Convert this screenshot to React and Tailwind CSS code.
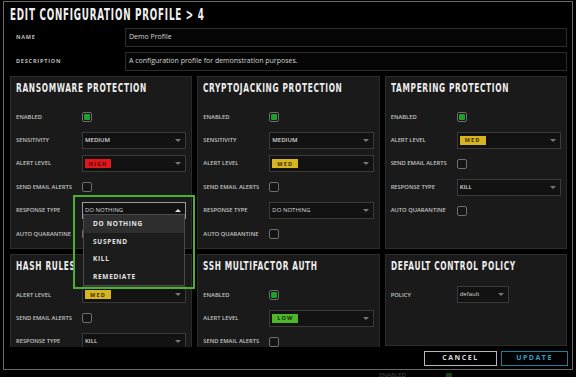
const TITLE = "font-['DejaVu_Sans',sans-serif] font-stretch-condensed whitespace-nowrap";
const BODY = "font-['Open_Sans',sans-serif]";

const Caret = ({ up }) =>
  up ? (
    <span className="w-0 h-0 border-l-[3px] border-r-[3px] border-b-[3px] border-l-transparent border-r-transparent border-b-[#e0e0e0]" />
  ) : (
    <span className="w-0 h-0 border-l-[3px] border-r-[3px] border-t-[3px] border-l-transparent border-r-transparent border-t-[#777777]" />
  );

const Badge = ({ level }) => {
  const colors = {
    HIGH: "bg-[#e3161c] text-[#3a0505]",
    MED: "bg-[#d8b520] text-[#3a3000]",
    LOW: "bg-[#4fb52a] text-[#0f3005]",
  };
  return (
    <span
      className={`w-[26px] h-[9px] flex items-center justify-center text-[5.5px] font-bold tracking-[1.2px] ${colors[level]}`}
    >
      {level}
    </span>
  );
};

const Check = ({ on }) => (
  <span className="w-[10px] h-[10px] border-[1.5px] border-[#6e6e6e] rounded-[2px] bg-[#141414] flex items-center justify-center">
    {on && <span className="w-[6px] h-[6px] bg-[#20a02a] rounded-[1px]" />}
  </span>
);

const Select = ({ children, open, narrow }) => (
  <div className={`relative ${narrow ? "w-[52px]" : "w-full"}`}>
    <div
      className={`h-[17px] border bg-[#121212] flex items-center justify-between pl-[2px] pr-[4px] ${
        open ? "border-[#9a9a9a]" : "border-[#3a3a3a]"
      }`}
    >
      <div className="text-[6px] font-semibold text-[#d8d8d8] flex items-center">{children}</div>
      <Caret up={open} />
    </div>
    {open && (
      <>
        <div className="absolute left-[-9px] top-[-7px] w-[122px] h-[94px] border-2 border-[#4bb12f] pointer-events-none" />
        <div className="absolute left-[1px] right-[1px] top-[12px] bg-[#1c1c1c] border border-[#4a4a4a] z-20">
          {["DO NOTHING", "SUSPEND", "KILL", "REMEDIATE"].map((o, i) => (
            <div
              key={o}
              className={`h-[17.6px] flex items-center pl-[9px] text-[6.5px] font-bold tracking-[0.7px] text-[#e4e4e4] ${
                i === 0 ? "bg-[#2e2e2e]" : ""
              }`}
            >
              {o}
            </div>
          ))}
        </div>
      </>
    )}
  </div>
);

const Row = ({ label, children }) => (
  <div className="flex items-center h-[23.4px]">
    <div className="w-[66px] shrink-0 text-[5.8px] font-semibold text-[#c4c4c4]">{label}</div>
    <div className="flex-1 flex items-center">{children}</div>
  </div>
);

const Panel = ({ title, children, className = "" }) => (
  <div className={`border border-[#2c2c2c] bg-[#1a1a1a] px-[5px] pt-[5px] ${className}`}>
    <div className={`h-[12px] flex items-center text-[12.5px] font-bold tracking-[1px] text-[#ececec] ${TITLE}`}>
      <span className="inline-block origin-left scale-x-[0.66]">{title}</span>
    </div>
    <div className="mt-[11.3px]">{children}</div>
  </div>
);

export default function App() {
  return (
    <div className={`relative w-[576px] h-[377px] bg-black overflow-hidden ${BODY}`}>
      <div className="pt-[371px] pl-[379px] flex items-center gap-[40px]">
        <span className="text-[6px] font-semibold text-[#3c3c3c]">ENABLED</span>
        <span className="w-[6px] h-[6px] bg-[#173f17]" />
      </div>

      <div className="absolute left-[3px] top-[1px] w-[570px] h-[369px] border border-[#6a6a6a] bg-black flex flex-col">
        <div className="h-[345px] overflow-hidden pl-[6px] pr-[5px]">
          <div className={`h-[26px] flex items-center text-[15px] font-bold tracking-[1.2px] text-[#f0f0f0] ${TITLE}`}>
            <span className="inline-block origin-left scale-x-[0.65]">EDIT CONFIGURATION PROFILE &gt; 4</span>
          </div>

          <div className="flex flex-col gap-[5px]">
            <div className="flex items-center h-[19px]">
              <div className="w-[115px] pl-[6px] text-[5.5px] font-bold tracking-[0.8px] text-[#bdbdbd]">NAME</div>
              <div className="flex-1 h-full border border-[#2c2c2c] bg-[#050505] flex items-center pl-[3px] text-[7px] text-[#d6d6d6]">
                Demo Profile
              </div>
            </div>
            <div className="flex items-center h-[19px]">
              <div className="w-[115px] pl-[6px] text-[5.5px] font-bold tracking-[0.8px] text-[#bdbdbd]">DESCRIPTION</div>
              <div className="flex-1 h-full border border-[#2c2c2c] bg-[#050505] flex items-center pl-[3px] text-[7px] text-[#d6d6d6]">
                A configuration profile for demonstration purposes.
              </div>
            </div>
          </div>

          <div className="mt-[5px] grid grid-cols-3 gap-[5px] items-start">
            <Panel title="RANSOMWARE PROTECTION" className="relative z-10 h-[173px]">
              <Row label="ENABLED"><Check on /></Row>
              <Row label="SENSITIVITY"><Select>MEDIUM</Select></Row>
              <Row label="ALERT LEVEL"><Select><Badge level="HIGH" /></Select></Row>
              <Row label="SEND EMAIL ALERTS"><Check /></Row>
              <Row label="RESPONSE TYPE"><Select open><span className="font-normal">DO NOTHING</span></Select></Row>
              <Row label="AUTO QUARANTINE"><Check /></Row>
            </Panel>
            <Panel title="CRYPTOJACKING PROTECTION" className="h-[173px]">
              <Row label="ENABLED"><Check on /></Row>
              <Row label="SENSITIVITY"><Select>MEDIUM</Select></Row>
              <Row label="ALERT LEVEL"><Select><Badge level="MED" /></Select></Row>
              <Row label="SEND EMAIL ALERTS"><Check /></Row>
              <Row label="RESPONSE TYPE"><Select><span className="font-normal">DO NOTHING</span></Select></Row>
              <Row label="AUTO QUARANTINE"><Check /></Row>
            </Panel>
            <Panel title="TAMPERING PROTECTION" className="h-[173px]">
              <Row label="ENABLED"><Check on /></Row>
              <Row label="ALERT LEVEL"><Select><Badge level="MED" /></Select></Row>
              <Row label="SEND EMAIL ALERTS"><Check /></Row>
              <Row label="RESPONSE TYPE"><Select>KILL</Select></Row>
              <Row label="AUTO QUARANTINE"><Check /></Row>
            </Panel>

            <Panel title="HASH RULES" className="h-[150px]">
              <Row label="ALERT LEVEL"><Select><Badge level="MED" /></Select></Row>
              <Row label="SEND EMAIL ALERTS"><Check /></Row>
              <Row label="RESPONSE TYPE"><Select>KILL</Select></Row>
              <Row label="AUTO QUARANTINE"><Check /></Row>
            </Panel>
            <Panel title="SSH MULTIFACTOR AUTH" className="h-[150px]">
              <Row label="ENABLED"><Check on /></Row>
              <Row label="ALERT LEVEL"><Select><Badge level="LOW" /></Select></Row>
              <Row label="SEND EMAIL ALERTS"><Check /></Row>
              <Row label="RESPONSE TYPE"><Select>KILL</Select></Row>
            </Panel>
            <Panel title="DEFAULT CONTROL POLICY" className="h-[92px]">
              <Row label="POLICY"><Select narrow><span className="font-normal">default</span></Select></Row>
            </Panel>
          </div>
        </div>

        <div className="flex-1 flex justify-end items-start gap-[4px] pt-[4px] pr-[4px]">
          <button className="w-[73px] h-[15px] border border-[#b8b8b8] bg-black text-[7px] font-bold tracking-[1.5px] text-[#dcdcdc]">
            CANCEL
          </button>
          <button className="w-[67px] h-[15px] border border-[#1d7f9c] bg-black text-[7px] font-bold tracking-[1.5px] text-[#2ba3c6]">
            UPDATE
          </button>
        </div>
      </div>
    </div>
  );
}
